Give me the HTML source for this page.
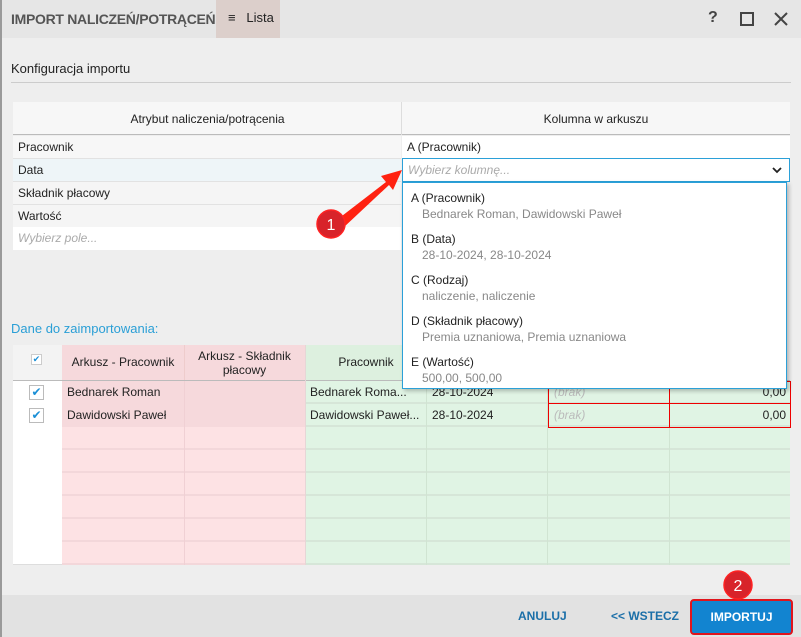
<!DOCTYPE html><html><head><meta charset="utf-8"><style>
*{box-sizing:border-box;margin:0;padding:0}
body{width:801px;height:637px;overflow:hidden;background:#eeeeee;font-family:"Liberation Sans",sans-serif;font-size:12px;color:#222;position:relative}
.a{position:absolute}
.t{white-space:nowrap;overflow:hidden}
.cell{position:absolute;height:23px;line-height:23px;padding-left:5px}
</style></head><body>
<div class="a" style="left:0;top:0;width:801px;height:38px;background:#e6e6e6"></div>
<div class="a" style="left:0;top:0;width:2px;height:637px;background:#9a9a9a"></div>
<div class="a t" style="left:11px;top:11px;width:205px;font-size:14px;font-weight:bold;color:#555;letter-spacing:-0.3px">IMPORT NALICZEŃ/POTRĄCEŃ</div>
<div class="a" style="left:216px;top:0;width:64px;height:38px;background:#dccfcb"></div>
<div class="a t" style="left:228px;top:10px;font-size:13px;color:#222">≡&nbsp;&nbsp; Lista</div>
<div class="a" style="left:708px;top:9px;font-size:16px;font-weight:bold;color:#444">?</div>
<div class="a" style="left:740px;top:12px;width:14px;height:14px;border:2px solid #444"></div>
<svg class="a" style="left:774px;top:12px" width="14" height="14"><path d="M1 1L13 13M13 1L1 13" stroke="#444" stroke-width="2"/></svg>
<div class="a" style="left:11px;top:61px;font-size:13px">Konfiguracja importu</div>
<div class="a" style="left:11px;top:82px;width:780px;height:1px;background:#ccc"></div>
<div class="a" style="left:13px;top:102px;width:777px;height:33px;background:#f7f7f7;border-bottom:1px solid #bbb"></div>
<div class="a" style="left:401px;top:102px;width:1px;height:33px;background:#ddd"></div>
<div class="a t" style="left:13px;top:112px;width:389px;text-align:center">Atrybut naliczenia/potrącenia</div>
<div class="a t" style="left:402px;top:112px;width:388px;text-align:center">Kolumna w arkuszu</div>
<div class="cell" style="left:13px;top:136px;width:388px;background:#f7f7f7">Pracownik</div>
<div class="cell" style="left:13px;top:158px;width:388px;background:#eef5f8;border-top:1px solid #e2e2e2">Data</div>
<div class="cell" style="left:13px;top:181px;width:388px;background:#f5f5f5;border-top:1px solid #e2e2e2">Składnik płacowy</div>
<div class="cell" style="left:13px;top:204px;width:388px;background:#f5f5f5;border-top:1px solid #e2e2e2">Wartość</div>
<div class="cell" style="left:13px;top:227px;width:388px;background:#fff;color:#aaa;font-style:italic">Wybierz pole...</div>
<div class="cell" style="left:402px;top:136px;width:388px;background:#fff">A (Pracownik)</div>
<div class="a" style="left:402px;top:158px;width:388px;height:24px;background:#fff;border:1px solid #2ba0d8;line-height:22px;padding-left:5px;color:#aaa;font-style:italic">Wybierz kolumnę...</div>
<svg class="a" style="left:772px;top:167px" width="10" height="7"><path d="M1 1L5 5L9 1" stroke="#222" stroke-width="1.8" fill="none"/></svg>
<div class="a" style="left:11px;top:321px;color:#2a9fd6;font-size:13px">Dane do zaimportowania:</div>
<div class="a" style="left:13px;top:345px;width:49px;height:35px;background:#f3f3f3"></div>
<div class="a" style="left:31px;top:354px;width:11px;height:11px;background:#fff;border:1px solid #ccc;color:#1a8fd6;font-size:9px;line-height:9px;text-align:center">✔</div>
<div class="a" style="left:62px;top:345px;width:243px;height:35px;background:#f6d9dc"></div>
<div class="a" style="left:184px;top:345px;width:1px;height:35px;background:#ecc"></div>
<div class="a" style="left:305px;top:345px;width:100px;height:35px;background:#ddf0df"></div>
<div class="a t" style="left:62px;top:355px;width:122px;text-align:center">Arkusz - Pracownik</div>
<div class="a" style="left:184px;top:349px;width:121px;text-align:center;line-height:14px">Arkusz - Składnik<br>płacowy</div>
<div class="a t" style="left:305px;top:355px;width:122px;text-align:center">Pracownik</div>
<div class="a" style="left:13px;top:380px;width:777px;height:1px;background:#bbb"></div>
<div class="a" style="left:13px;top:381px;width:49px;height:184px;background:#fff;border-bottom:1px solid #ddd"></div>
<div class="a" style="left:62px;top:381px;width:243px;height:46px;background:#f6d9dc"></div>
<div class="a" style="left:62px;top:427px;width:243px;height:138px;background:repeating-linear-gradient(to bottom,#fde2e4 0,#fde2e4 21px,#f3d7da 21px,#f3d7da 23px)"></div>
<div class="a" style="left:305px;top:381px;width:485px;height:184px;background:repeating-linear-gradient(to bottom,#e0f4e4 0,#e0f4e4 21px,#d6e6d8 21px,#d6e6d8 23px)"></div>
<div class="a" style="left:184px;top:381px;width:1px;height:184px;background:#f0d0d4"></div>
<div class="a" style="left:305px;top:345px;width:1px;height:220px;background:#e6d6d6"></div>
<div class="a" style="left:426px;top:381px;width:1px;height:184px;background:#d0e4d2"></div>
<div class="a" style="left:547px;top:381px;width:1px;height:184px;background:#d0e4d2"></div>
<div class="a" style="left:669px;top:381px;width:1px;height:184px;background:#d0e4d2"></div>
<div class="a" style="left:548px;top:381px;width:243px;height:47px;border:1px solid #e00;"></div>
<div class="a" style="left:548px;top:403px;width:243px;height:1px;background:#e00"></div>
<div class="a" style="left:669px;top:381px;width:1px;height:47px;background:#e00"></div>
<div class="a" style="left:29px;top:385px;width:15px;height:15px;background:#fff;border:1px solid #bbb;color:#1a8fd6;text-align:center;line-height:13px;font-size:12px">✔</div>
<div class="a" style="left:29px;top:408px;width:15px;height:15px;background:#fff;border:1px solid #bbb;color:#1a8fd6;text-align:center;line-height:13px;font-size:12px">✔</div>
<div class="cell t" style="left:62px;top:381px">Bednarek Roman</div>
<div class="cell t" style="left:62px;top:404px">Dawidowski Paweł</div>
<div class="cell t" style="left:305px;top:381px">Bednarek Roma...</div>
<div class="cell t" style="left:305px;top:404px">Dawidowski Paweł...</div>
<div class="cell t" style="left:427px;top:381px">28-10-2024</div>
<div class="cell t" style="left:427px;top:404px">28-10-2024</div>
<div class="cell t" style="left:549px;top:381px;color:#bbb;font-style:italic">(brak)</div>
<div class="cell t" style="left:549px;top:404px;color:#bbb;font-style:italic">(brak)</div>
<div class="cell t" style="left:670px;top:381px;width:116px;text-align:right">0,00</div>
<div class="cell t" style="left:670px;top:404px;width:116px;text-align:right">0,00</div>
<!-- dropdown on top -->
<div class="a" style="z-index:5;left:402px;top:182px;width:385px;height:207px;background:#fff;border:1px solid #2ba0d8;box-shadow:2px 2px 4px rgba(0,0,0,.25)">
<div style="position:absolute;left:8px;top:8px">A (Pracownik)</div><div style="position:absolute;left:19px;top:24px;color:#888">Bednarek Roman, Dawidowski Paweł</div>
<div style="position:absolute;left:8px;top:49px">B (Data)</div><div style="position:absolute;left:19px;top:65px;color:#888">28-10-2024, 28-10-2024</div>
<div style="position:absolute;left:8px;top:90px">C (Rodzaj)</div><div style="position:absolute;left:19px;top:106px;color:#888">naliczenie, naliczenie</div>
<div style="position:absolute;left:8px;top:131px">D (Składnik płacowy)</div><div style="position:absolute;left:19px;top:147px;color:#888">Premia uznaniowa, Premia uznaniowa</div>
<div style="position:absolute;left:8px;top:172px">E (Wartość)</div><div style="position:absolute;left:19px;top:188px;color:#888">500,00, 500,00</div>
</div>
<div class="a" style="left:2px;top:595px;width:799px;height:42px;background:#e2e2e2"></div>
<div class="a" style="left:518px;top:609px;font-weight:bold;color:#1b6fa8">ANULUJ</div>
<div class="a" style="left:611px;top:609px;font-weight:bold;color:#1b6fa8">&lt;&lt; WSTECZ</div>
<div class="a" style="left:690px;top:599px;width:103px;height:36px;border:2px solid #e0141c;border-radius:4px;background:#1284d0;color:#fff;font-weight:bold;text-align:center;line-height:32px">IMPORTUJ</div>
<svg class="a" style="left:0;top:0;z-index:6" width="801" height="637">
<path d="M338 219L386 182L381 176L402 170L393 190L389 185L343 228Z" fill="#f21"/>
<circle cx="331" cy="224" r="14" fill="#d8232a" stroke="#f22" stroke-width="1.5"/>
<circle cx="738" cy="585" r="14" fill="#d8232a" stroke="#f22" stroke-width="1.5"/>
<text x="331" y="230" fill="#fff" font-size="16" text-anchor="middle" font-family="Liberation Sans">1</text>
<text x="738" y="591" fill="#fff" font-size="16" text-anchor="middle" font-family="Liberation Sans">2</text>
</svg>
</body></html>
